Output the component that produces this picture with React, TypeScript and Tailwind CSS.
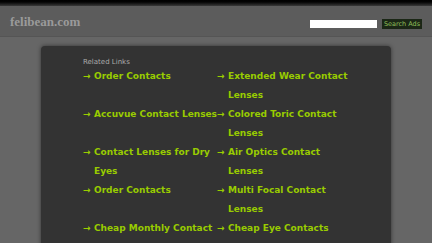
import React from "react";

const links: [string, string][] = [
  ["Order Contacts", "Extended Wear Contact Lenses"],
  ["Accuvue Contact Lenses", "Colored Toric Contact Lenses"],
  ["Contact Lenses for Dry Eyes", "Air Optics Contact Lenses"],
  ["Order Contacts", "Multi Focal Contact Lenses"],
  ["Cheap Monthly Contact", "Cheap Eye Contacts"],
];

function LinkItem({ text }: { text: string }) {
  return (
    <a href="#" className="flex text-[#9c0] font-bold no-underline">
      <span className="w-[11px] shrink-0">→</span>
      <span>{text}</span>
    </a>
  );
}

export default function App() {
  return (
    <div
      className="w-full h-[243px] overflow-hidden bg-[#666]"
      style={{ fontFamily: "'DejaVu Sans', sans-serif" }}
    >
      <div className="h-[6px] bg-gradient-to-b from-[#000] to-[#3a3a3a]" />
      <div className="h-[31px] bg-[#5c5c5c] border-b border-[#555] flex items-center justify-between pl-[10px] pr-[10px]">
        <div
          className="text-[13px] font-bold text-[#9a9a9a] mt-[1px]"
          style={{ fontFamily: "'Liberation Serif', serif" }}
        >
          felibean.com
        </div>
        <div className="flex items-center gap-[5px] mt-[5px]">
          <input className="w-[67px] h-[8px] bg-white border-0 outline-none" />
          <button className="w-[40px] h-[10px] bg-[#1b2716] text-[#8fbf5a] text-[6.5px] leading-[10px]">
            Search Ads
          </button>
        </div>
      </div>
      <div className="ml-[41px] mt-[9px] w-[350px] h-[220px] bg-[#333] rounded-[4px] shadow-[0_0_4px_rgba(0,0,0,0.5)] pl-[42px] pt-[11px]">
        <div className="text-[7px] text-[#aaa] leading-[10px]">Related Links</div>
        <div className="grid grid-cols-[134px_134px] text-[9px] leading-[19px]">
          {links.map(([a, b], i) => (
            <React.Fragment key={i}>
              <LinkItem text={a} />
              <LinkItem text={b} />
            </React.Fragment>
          ))}
        </div>
      </div>
    </div>
  );
}
